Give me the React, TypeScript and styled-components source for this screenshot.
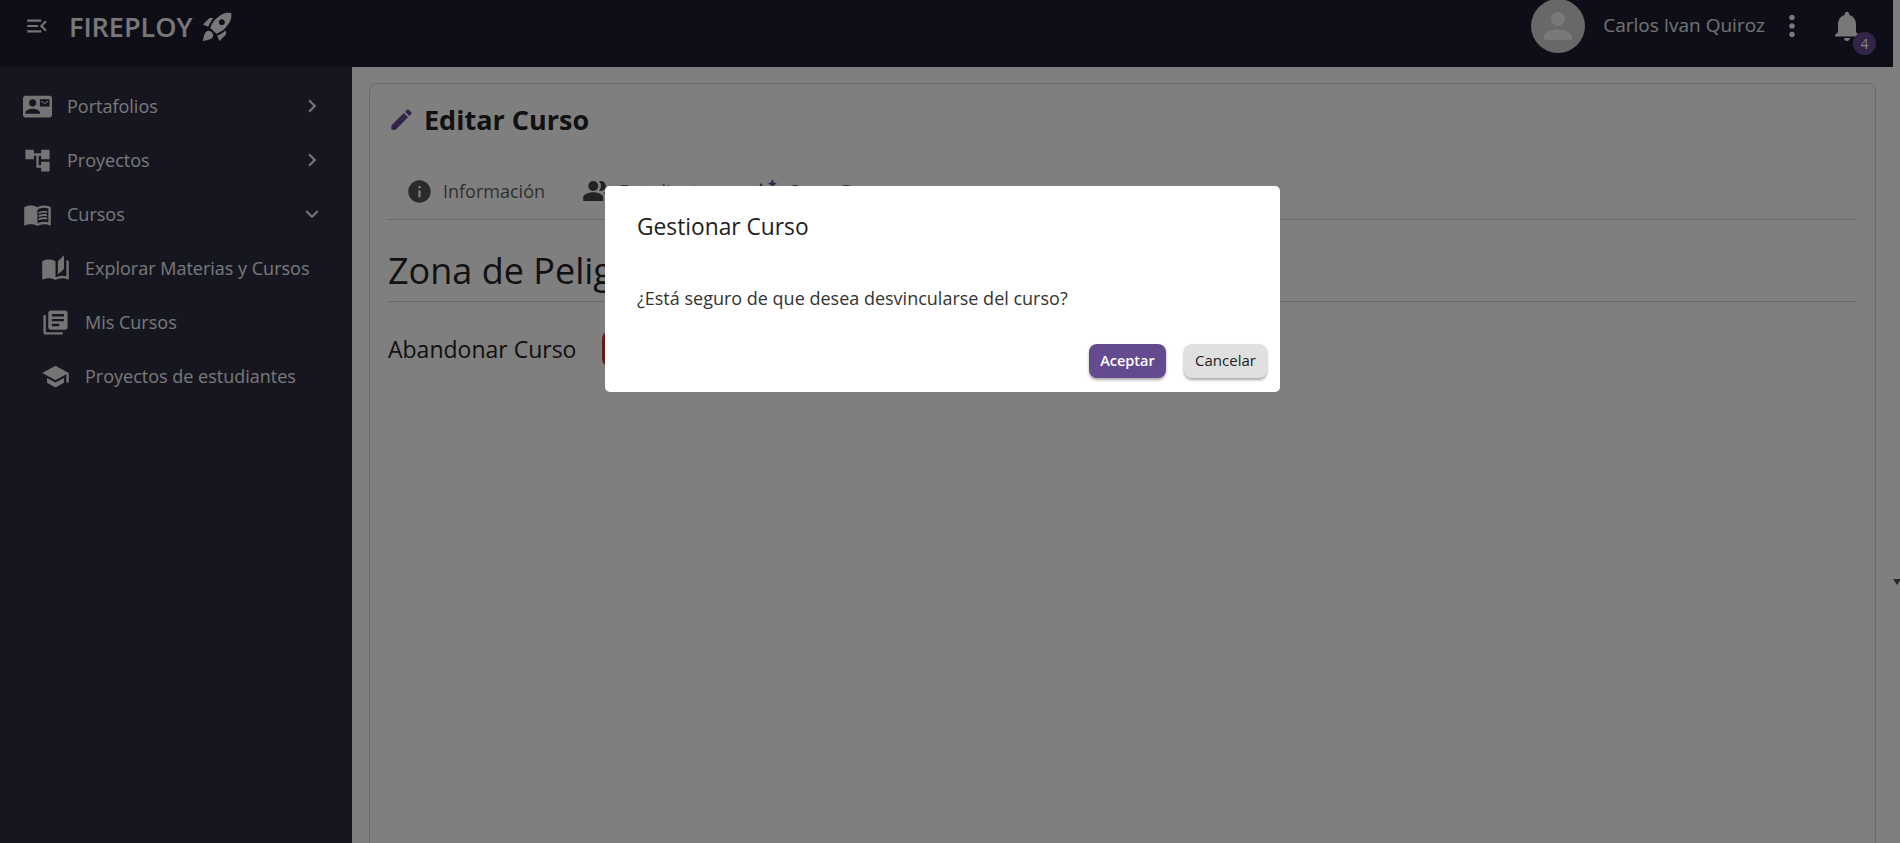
import React from "react";
import styled, { createGlobalStyle } from "styled-components";
import {
  MdMenuOpen,
  MdContactMail,
  MdAccountTree,
  MdMenuBook,
  MdAutoStories,
  MdLibraryBooks,
  MdSchool,
  MdChevronRight,
  MdExpandMore,
  MdEdit,
  MdInfo,
  MdPeopleAlt,
  MdAutoAwesome,
  MdPerson,
  MdMoreVert,
  MdNotifications,
  MdRocketLaunch,
} from "react-icons/md";

const Global = createGlobalStyle`
  html, body { margin: 0; padding: 0; height: 100%; overflow: hidden; }
  body { font-family: "Open Sans", "Noto Sans", sans-serif; background: #fff; }
  #root { height: 100%; }
  * { box-sizing: border-box; }
`;

const Page = styled.div`
  width: 1900px;
  height: 843px;
  display: flex;
  overflow: hidden;
`;

const Column = styled.div`
  flex: 1;
  min-width: 0;
  display: flex;
  flex-direction: column;
`;

const Header = styled.header`
  height: 67px;
  flex: none;
  background: #1c1c30;
  display: flex;
  align-items: center;
  padding: 0 7px 15px 24px;
  color: #fff;
`;

const Burger = styled.span`
  display: flex;
  font-size: 26px;
  margin-right: 19px;
  color: #e8e8e8;
`;

const Brand = styled.span`
  font-size: 27px;
  font-weight: 600;
  color: #f0f0f0;
  margin-right: 8px;
`;

const Rocket = styled(MdRocketLaunch)`
  font-size: 35px;
  color: #f0f0f0;
`;

const HeaderRight = styled.div`
  margin-left: auto;
  display: flex;
  align-items: center;
`;

const Avatar = styled.span`
  width: 54px;
  height: 54px;
  border-radius: 50%;
  background: #d0d0d0;
  color: #f2f2f2;
  display: flex;
  align-items: center;
  justify-content: center;
  font-size: 42px;
  margin-right: 18px;
`;

const UserName = styled.span`
  font-size: 19px;
  color: #e4e4e4;
  margin-right: 10px;
  padding-bottom: 2px;
`;

const More = styled(MdMoreVert)`
  font-size: 34px;
  color: #f0f0f0;
  margin-right: 20px;
`;

const Bell = styled.span`
  position: relative;
  display: flex;
  font-size: 36px;
  color: #f0f0f0;
  margin-right: 21px;
`;

const Badge = styled.span`
  position: absolute;
  left: 24px;
  top: 24px;
  width: 23px;
  height: 23px;
  border-radius: 50%;
  background: #644a8e;
  color: #fff;
  font-size: 14px;
  display: flex;
  align-items: center;
  justify-content: center;
`;

const Body = styled.div`
  flex: 1;
  display: flex;
  min-height: 0;
`;

const Sidebar = styled.nav`
  width: 352px;
  flex: none;
  background: #2a2c3e;
  padding-top: 12px;
  display: flex;
  flex-direction: column;
`;

const NavRow = styled.div<{ $sub?: boolean }>`
  height: 54px;
  display: flex;
  align-items: center;
  padding-left: ${(p) => (p.$sub ? 41 : 23)}px;
  padding-right: 27px;
  color: #f0f0f0;
  font-size: 18px;
`;

const NavIcon = styled.span`
  width: 44px;
  flex: none;
  display: flex;
  font-size: 29px;
  color: #e8e8e8;
`;

const NavLabel = styled.span`
  flex: 1;
  white-space: nowrap;
`;

const NavChevron = styled.span`
  display: flex;
  font-size: 26px;
  color: #e8e8e8;
`;

const Main = styled.main`
  flex: 1;
  min-width: 0;
  padding: 16px 17px 0 17px;
  background: #fff;
  display: flex;
`;

const Card = styled.section`
  flex: 1;
  border: 1px solid #d6d6d6;
  border-bottom: none;
  border-radius: 8px 8px 0 0;
  padding: 17px 19px 0 18px;
`;

const TitleRow = styled.div`
  display: flex;
  align-items: center;
  height: 37px;
  margin-bottom: 33px;
`;

const TitleIcon = styled(MdEdit)`
  font-size: 27px;
  color: #644a8e;
  margin-right: 8px;
`;

const Title = styled.h1`
  margin: 0 0 0 1px;
  font-size: 27px;
  font-weight: 700;
  color: #222;
`;

const Tabs = styled.div`
  display: flex;
  height: 49px;
  padding: 0 0 8px 18px;
  align-items: center;
  border-bottom: 1px solid #d0d0d0;
`;

const Tab = styled.div`
  display: flex;
  align-items: center;
  gap: 10px;
  font-size: 18px;
  color: #5f5f5f;
  margin-right: 37px;
  svg {
    font-size: 27px;
    color: #555;
  }
`;

const PeopleTab = styled(Tab)`
  gap: 7px;
  margin-right: 34px;
  svg {
    font-size: 30px;
    color: #444;
  }
`;

const SparkTab = styled(Tab)`
  svg {
    color: #644a8e;
  }
`;

const DangerHeading = styled.h2`
  margin: 0;
  height: 82px;
  padding-top: 26px;
  font-size: 36px;
  line-height: 50px;
  font-weight: 400;
  color: #222;
  border-bottom: 1px solid #d0d0d0;
`;

const DangerRow = styled.div`
  display: flex;
  align-items: center;
  margin-top: 29px;
`;

const DangerLabel = styled.span`
  font-size: 23px;
  color: #222;
  width: 214px;
`;

const DangerButton = styled.button`
  height: 36px;
  width: 130px;
  border: none;
  border-radius: 8px;
  background: #d32f2f;
  color: #fff;
  font: inherit;
`;

const Track = styled.div`
  width: 7px;
  flex: none;
  background: #fff;
  padding-top: 579px;
`;

const Arrow = styled.span`
  width: 0;
  height: 0;
  border-left: 4px solid transparent;
  border-right: 4px solid transparent;
  border-top: 6px solid #505050;
  display: block;
`;

const Overlay = styled.div`
  position: fixed;
  inset: 0;
  background: rgba(0, 0, 0, 0.5);
  display: flex;
  justify-content: center;
  align-items: flex-start;
  padding: 186px 15px 0 0;
`;

const Dialog = styled.div`
  width: 675px;
  height: 206px;
  background: #fff;
  border-radius: 5px;
  display: flex;
  flex-direction: column;
  padding: 25px 13px 14px 32px;
`;

const DialogTitle = styled.h3`
  margin: 0;
  font-size: 22.75px;
  line-height: 32px;
  font-weight: 400;
  color: #222;
`;

const DialogText = styled.p`
  margin: 43px 0 0;
  font-size: 18px;
  line-height: 24px;
  color: #333;
`;

const Actions = styled.div`
  margin-top: auto;
  display: flex;
  justify-content: flex-end;
  gap: 18px;
`;

const ActionButton = styled.button<{ $primary?: boolean }>`
  height: 34px;
  border: none;
  border-radius: 8px;
  padding: 0 0 2px;
  font-family: inherit;
  font-size: ${(p) => (p.$primary ? 14.5 : 15)}px;
  font-weight: ${(p) => (p.$primary ? 600 : 400)};
  width: ${(p) => (p.$primary ? 77 : 83)}px;
  background: ${(p) => (p.$primary ? "#644a8e" : "#e0e0e0")};
  color: ${(p) => (p.$primary ? "#fff" : "#222")};
  box-shadow: 0 2px 3px rgba(0, 0, 0, 0.35);
`;

export default function App() {
  return (
    <Page>
      <Global />
      <Column>
        <Header>
          <Burger>
            <MdMenuOpen />
          </Burger>
          <Brand>FIREPLOY</Brand>
          <Rocket />
          <HeaderRight>
            <Avatar>
              <MdPerson />
            </Avatar>
            <UserName>Carlos Ivan Quiroz</UserName>
            <More />
            <Bell>
              <MdNotifications />
              <Badge>4</Badge>
            </Bell>
          </HeaderRight>
        </Header>
        <Body>
          <Sidebar>
            <NavRow>
              <NavIcon><MdContactMail /></NavIcon>
              <NavLabel>Portafolios</NavLabel>
              <NavChevron><MdChevronRight /></NavChevron>
            </NavRow>
            <NavRow>
              <NavIcon><MdAccountTree /></NavIcon>
              <NavLabel>Proyectos</NavLabel>
              <NavChevron><MdChevronRight /></NavChevron>
            </NavRow>
            <NavRow>
              <NavIcon><MdMenuBook /></NavIcon>
              <NavLabel>Cursos</NavLabel>
              <NavChevron><MdExpandMore /></NavChevron>
            </NavRow>
            <NavRow $sub>
              <NavIcon><MdAutoStories /></NavIcon>
              <NavLabel>Explorar Materias y Cursos</NavLabel>
            </NavRow>
            <NavRow $sub>
              <NavIcon><MdLibraryBooks /></NavIcon>
              <NavLabel>Mis Cursos</NavLabel>
            </NavRow>
            <NavRow $sub>
              <NavIcon><MdSchool /></NavIcon>
              <NavLabel>Proyectos de estudiantes</NavLabel>
            </NavRow>
          </Sidebar>
          <Main>
            <Card>
              <TitleRow>
                <TitleIcon />
                <Title>Editar Curso</Title>
              </TitleRow>
              <Tabs>
                <Tab><MdInfo />Información</Tab>
                <PeopleTab><MdPeopleAlt />Estudiantes</PeopleTab>
                <SparkTab><MdAutoAwesome />Crear Grupo</SparkTab>
              </Tabs>
              <DangerHeading>Zona de Peligro</DangerHeading>
              <DangerRow>
                <DangerLabel>Abandonar Curso</DangerLabel>
                <DangerButton>Abandonar</DangerButton>
              </DangerRow>
            </Card>
          </Main>
        </Body>
      </Column>
      <Track>
        <Arrow />
      </Track>
      <Overlay>
        <Dialog>
          <DialogTitle>Gestionar Curso</DialogTitle>
          <DialogText>¿Está seguro de que desea desvincularse del curso?</DialogText>
          <Actions>
            <ActionButton $primary>Aceptar</ActionButton>
            <ActionButton>Cancelar</ActionButton>
          </Actions>
        </Dialog>
      </Overlay>
    </Page>
  );
}
